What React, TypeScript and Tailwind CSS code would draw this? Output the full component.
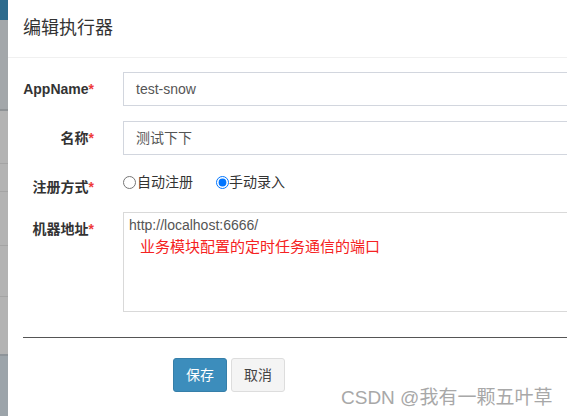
import React from 'react';

const font = { fontFamily: '"Liberation Sans", Arial, "Noto Sans CJK SC", sans-serif' };

function Label({ text }: { text: string }) {
  return (
    <div className="w-[71px] shrink-0 whitespace-nowrap pt-[7px] text-right text-[14px] font-bold leading-[20px] text-[#333]">
      {text}
      <span className="text-[#ee3a3a]">*</span>
    </div>
  );
}

export default function App() {
  return (
    <div className="relative flex h-[416px] w-[567px] overflow-hidden bg-white" style={font}>
      {/* backdrop strip on the left */}
      <div className="flex w-[8px] shrink-0 flex-col">
        <div className="h-[20px] bg-[#2d6b8d]" />
        <div className="h-[89px] bg-[#a3a7aa]" />
        <div className="h-[2px] bg-[#8f9396]" />
        <div className="h-[53px] border-b border-[#a4a4a4] bg-[#b3b3b3]" />
        <div className="h-[28px] border-b border-[#a4a4a4] bg-[#b3b3b3]" />
        <div className="h-[54px] border-b border-[#a4a4a4] bg-[#b3b3b3]" />
        <div className="h-[51px] border-b border-[#a4a4a4] bg-[#b3b3b3]" />
        <div className="h-[59px] border-b-2 border-[#8e9499] bg-[#b3b3b3]" />
        <div className="flex-1 bg-[#9ca4aa]" />
      </div>

      {/* modal */}
      <div className="flex min-w-0 flex-1 flex-col">
        <div className="flex h-[58px] shrink-0 items-center border-b border-[#f0f0f0] px-[15px]">
          <h4 className="text-[18px] font-normal text-[#333]">编辑执行器</h4>
        </div>

        <div className="flex flex-col pl-[15px] pt-[14px]">
          <div className="flex">
            <Label text="AppName" />
            <div className="ml-[29px] flex h-[34px] w-[480px] shrink-0 items-center border border-[#d2d6de] px-[12px] text-[14px] text-[#555]">
              test-snow
            </div>
          </div>

          <div className="mt-[15px] flex">
            <Label text="名称" />
            <div className="ml-[29px] flex h-[34px] w-[480px] shrink-0 items-center border border-[#d2d6de] px-[12px] text-[14px] text-[#555]">
              测试下下
            </div>
          </div>

          <div className="mt-[15px] flex h-[27px]">
            <Label text="注册方式" />
            <div className="ml-[29px] flex h-[24px] items-center text-[14px] text-[#333]">
              <label className="flex items-center">
                <input type="radio" name="addressType" className="m-0 h-[13px] w-[13px]" readOnly />
                <span className="ml-[1px]">自动注册</span>
              </label>
              <label className="ml-[23px] flex items-center">
                <input type="radio" name="addressType" className="m-0 h-[13px] w-[13px]" defaultChecked />
                <span>手动录入</span>
              </label>
            </div>
          </div>

          <div className="mt-[15px] flex">
            <Label text="机器地址" />
            <div className="ml-[29px] h-[100px] w-[480px] shrink-0 border border-[#d9d9d9] pl-[5px] pt-[2px] text-[14px] text-[#555]">
              <div className="leading-[20px]">http://localhost:6666/</div>
              <div className="mt-[2px] pl-[11px] text-[15px] leading-[20px] text-[#f52222]">
                业务模块配置的定时任务通信的端口
              </div>
            </div>
          </div>

          <div className="mt-[25px] h-px w-[560px] bg-[#555]" />

          <div className="mt-[20px] flex pl-[150px]">
            <button className="h-[34px] w-[54px] rounded-[3px] border border-[#367fa9] bg-[#3c8dbc] text-[14px] text-white">
              保存
            </button>
            <button className="ml-[4px] h-[34px] w-[54px] rounded-[3px] border border-[#ddd] bg-[#f4f4f4] text-[14px] text-[#444]">
              取消
            </button>
          </div>
        </div>
      </div>

      {/* watermark */}
      <div className="absolute left-[341px] top-[386px] whitespace-nowrap text-[19px] leading-[24px] text-[#a8a8a8]">
        CSDN @我有一颗五叶草
      </div>
    </div>
  );
}
